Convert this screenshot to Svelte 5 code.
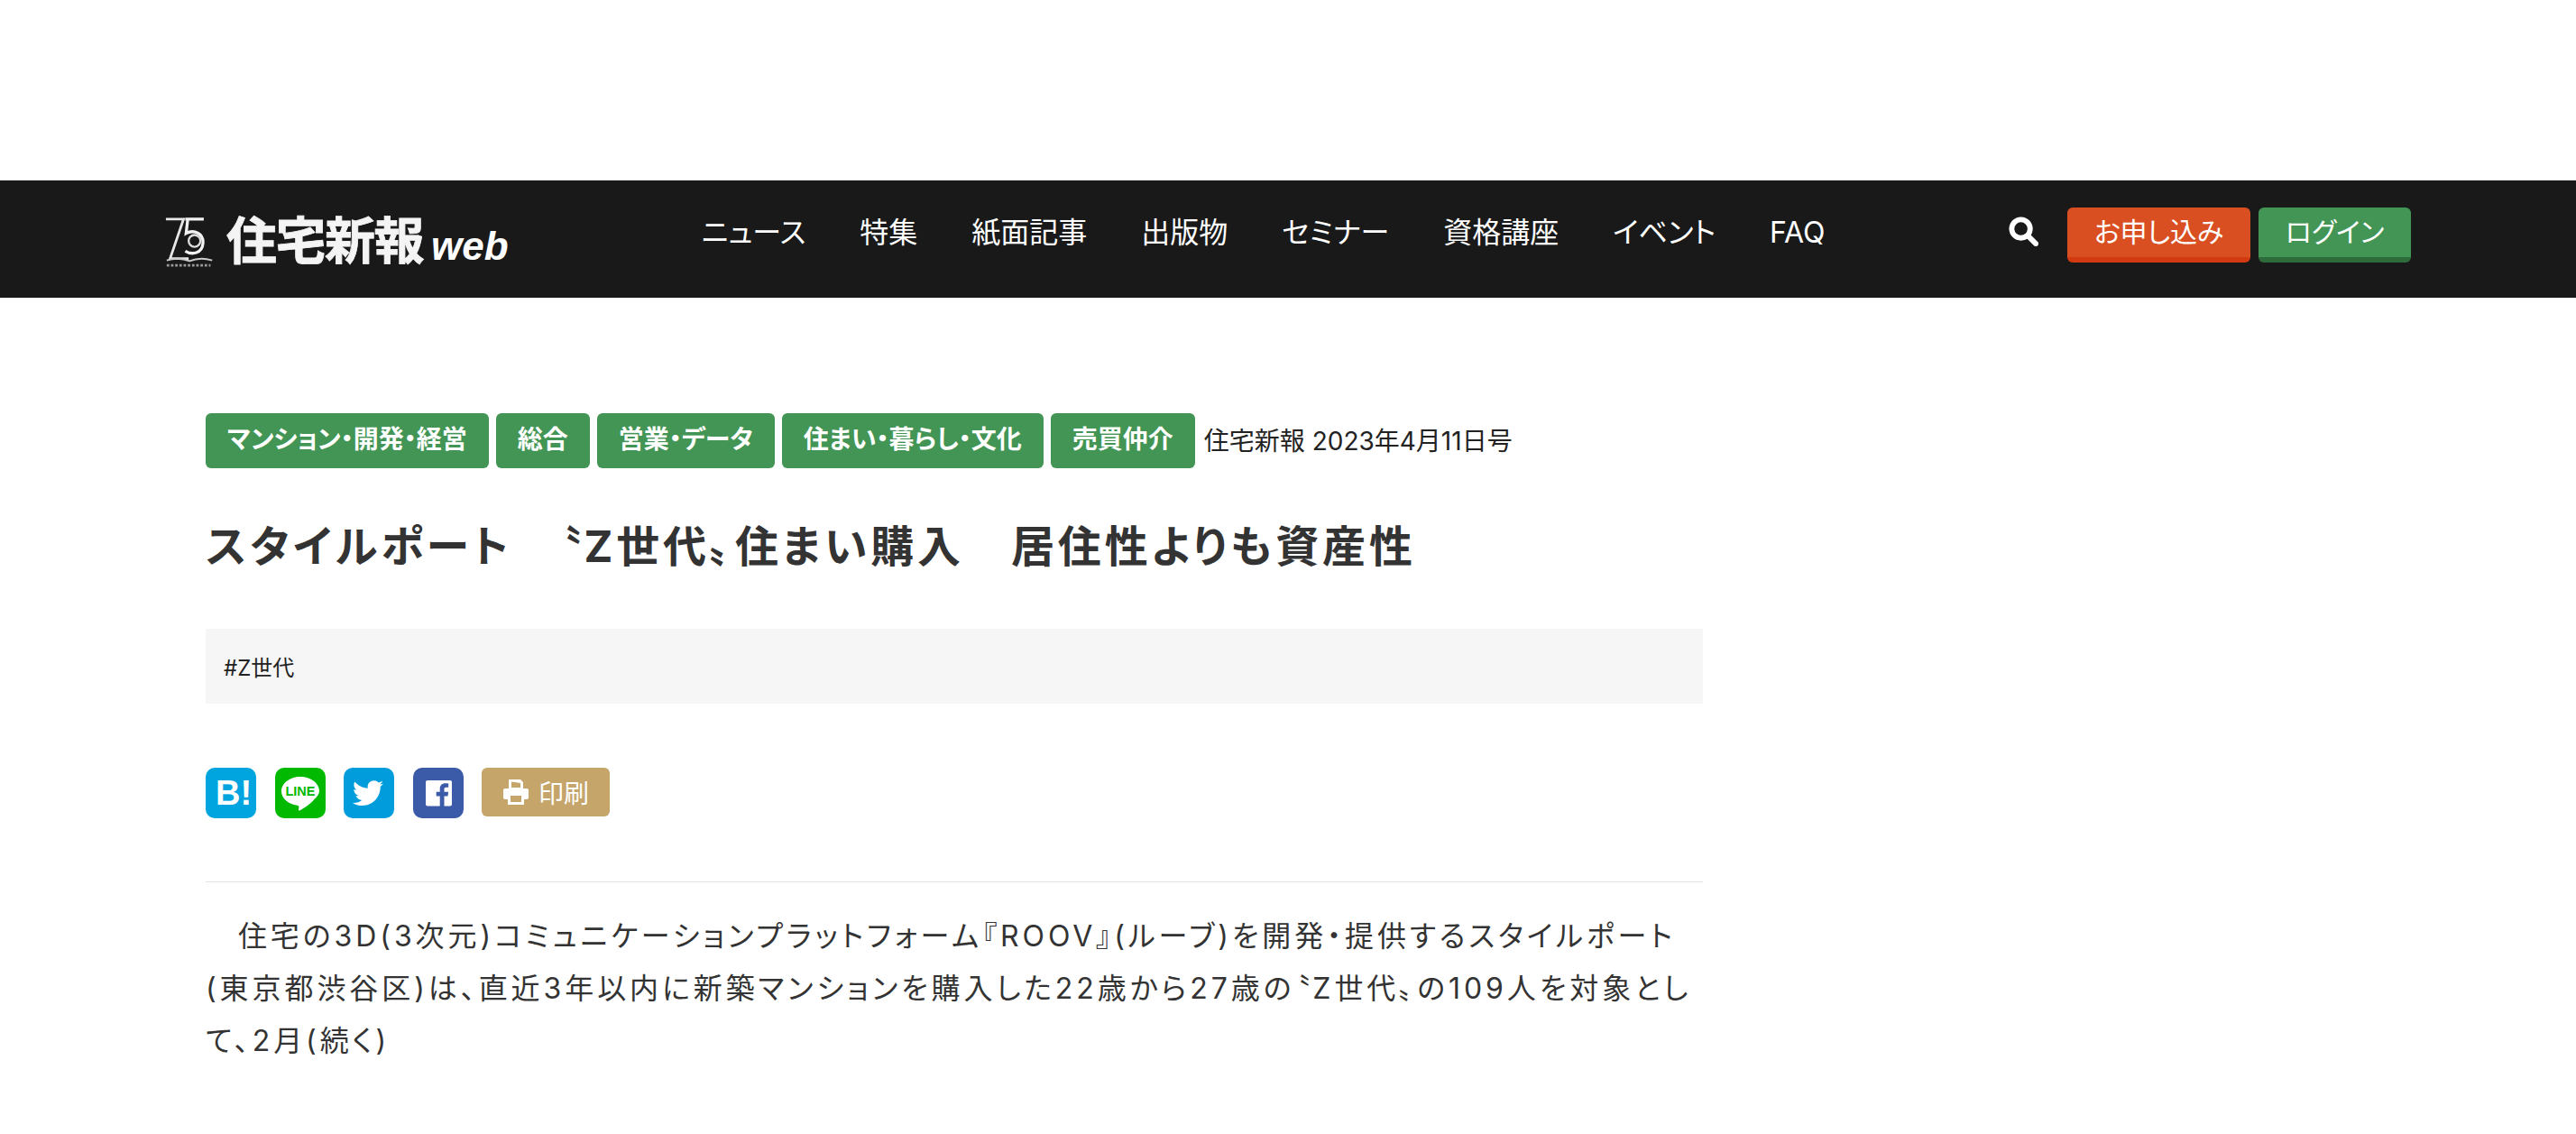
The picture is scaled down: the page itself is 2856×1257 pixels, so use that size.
<script>
	const nav = ['ニュース', '特集', '紙面記事', '出版物', 'セミナー', '資格講座', 'イベント', 'FAQ'];
	const tags = ['マンション・開発・経営', '総合', '営業・データ', '住まい・暮らし・文化', '売買仲介'];
</script>

<div class="page">
	<header class="header">
		<a class="logo" href="#top">
			<svg class="logo-mark" viewBox="0 0 60 60" width="56" height="60" aria-hidden="true">
				<path d="M1 3H22L6 50H28" fill="none" stroke="#e8e8e8" stroke-width="3" />
				<path d="M24 3H46M27 3L25 20C34 15 46 20 45 32C44 44 32 46 24 41" fill="none" stroke="#f2f2f2" stroke-width="3.500" />
				<circle cx="35" cy="29" r="7" fill="none" stroke="#ddd" stroke-width="2.500" />
				<path d="M2 52C12 49 22 50 29 53C36 50 46 49 56 52" fill="none" stroke="#ccc" stroke-width="2" />
				<path d="M2 58H54" stroke="#999" stroke-width="3" stroke-dasharray="3 2" />
			</svg>
			<span class="logo-text">住宅新報</span>
			<span class="logo-web">web</span>
		</a>
		<nav class="nav">
			{#each nav as item}
				<a href="#top">{item}</a>
			{/each}
		</nav>
		<div class="actions">
			<svg class="search" viewBox="0 0 34 34" width="33" height="33" aria-hidden="true">
				<circle cx="14" cy="14" r="10.5" fill="none" stroke="#fff" stroke-width="6" />
				<path d="M22 22L31 31" stroke="#fff" stroke-width="6" stroke-linecap="round" />
			</svg>
			<a class="btn btn-apply" href="#top">お申し込み</a>
			<a class="btn btn-login" href="#top">ログイン</a>
		</div>
	</header>

	<main class="article">
		<div class="meta">
			{#each tags as tag}
				<span class="tag">{tag}</span>
			{/each}
			<span class="issue">住宅新報 2023年4月11日号</span>
		</div>

		<h1 class="title">スタイルポート　〝Z世代〟住まい購入　居住性よりも資産性</h1>

		<div class="keywords">#Z世代</div>

		<div class="share">
			<svg class="icon" viewBox="0 0 56 56" aria-label="はてなブックマーク">
				<rect width="56" height="56" rx="10" fill="#00a4de" />
				<text x="11" y="41" class="icon-b">B!</text>
			</svg>
			<svg class="icon" viewBox="0 0 56 56" aria-label="LINE">
				<rect width="56" height="56" rx="10" fill="#00b900" />
				<path d="M28 10C16.400 10 7 17.200 7 26C7 33.900 14.400 40.400 24.500 41.700C25.200 41.900 26.100 42.200 26.300 42.700C26.500 43.200 26.400 43.900 26.300 44.400L26 46.100C25.900 46.600 25.600 48 27.600 47.200C29.600 46.300 38.400 40.800 42.400 36.200C45.100 33.200 49 30 49 26C49 17.200 39.600 10 28 10Z" fill="#fff" />
				<text x="28" y="31" class="icon-line">LINE</text>
			</svg>
			<svg class="icon" viewBox="0 0 56 56" aria-label="Twitter">
				<rect width="56" height="56" rx="10" fill="#009cdb" />
				<path d="M44 17.500C42.700 18.100 41.400 18.500 40 18.600C41.400 17.800 42.500 16.400 43 14.800C41.700 15.600 40.200 16.100 38.700 16.400C37.400 15 35.600 14.200 33.600 14.200C29.700 14.200 26.600 17.300 26.600 21.200C26.600 21.800 26.700 22.300 26.800 22.800C21 22.500 15.800 19.700 12.300 15.500C11.700 16.500 11.400 17.700 11.400 19C11.400 21.400 12.600 23.600 14.500 24.800C13.300 24.800 12.300 24.500 11.300 24C11.300 27.500 13.700 30.300 16.900 31C16.300 31.100 15.700 31.200 15 31.200C14.600 31.200 14.100 31.200 13.700 31.100C14.600 33.900 17.200 35.900 20.200 36C17.800 37.900 14.800 39 11.500 39C10.900 39 10.400 39 9.800 38.900C12.900 40.900 16.600 42 20.500 42C33.600 42 40.700 31.200 40.700 21.800V20.900C42 19.900 43.100 18.800 44 17.500Z" fill="#fff" />
			</svg>
			<svg class="icon" viewBox="0 0 56 56" aria-label="Facebook">
				<rect width="56" height="56" rx="10" fill="#3b5ba9" />
				<path d="M16 14H41C42.100 14 43 14.900 43 16V40.500C43 41.600 42.100 42.500 41 42.500H34.500V31.500H38.500L39.100 26.800H34.500V24C34.500 22.600 34.900 21.700 36.800 21.700H39.200V17.500C38.800 17.400 37.400 17.300 35.700 17.300C32.200 17.300 29.700 19.500 29.700 23.500V26.800H25.700V31.500H29.700V42.500H16C14.900 42.500 14 41.600 14 40.500V16C14 14.900 14.900 14 16 14Z" fill="#fff" />
			</svg>
			<a class="print" href="#top">
				<svg viewBox="0 0 30 30" width="30" height="30" aria-hidden="true">
					<path d="M7 1H20L23 4V11H7Z M3 11H27C28.100 11 29 11.900 29 13V21C29 22.100 28.100 23 27 23H24V29H6V23H3C1.900 23 1 22.100 1 21V13C1 11.900 1.900 11 3 11Z" fill="#fff" />
					<path d="M9 19H21V26H9Z M10 3.500V10H20V5Z" fill="#c5a56a" />
				</svg>
				<span>印刷</span>
			</a>
		</div>

		<div class="body">
			<p>　住宅の3D(3次元)コミュニケーションプラットフォーム『ROOV』(ルーブ)を開発・提供するスタイルポート(東京都渋谷区)は、直近3年以内に新築マンションを購入した22歳から27歳の〝Z世代〟の109人を対象として、2月(続く)</p>
		</div>
	</main>
</div>

<style>
	:global(body) {
		margin: 0;
		background: #fff;
		font-family: Inter, "Noto Sans CJK JP", sans-serif;
		font-feature-settings: "palt";
		color: #333;
	}

	.page {
		padding-top: 200px;
		padding-bottom: 60px;
	}

	.header {
		height: 130px;
		background: #191919;
		display: flex;
		align-items: center;
		padding: 0 183px 0 183px;
		box-sizing: border-box;
	}

	.logo {
		display: flex;
		align-items: center;
		width: 595px;
		color: #fff;
		text-decoration: none;
	}

	.logo-mark {
		margin-top: 6px;
		flex-shrink: 0;
	}

	.logo-text {
		margin: -4px 0 0 12px;
		font-size: 56px;
		line-height: 60px;
		font-weight: 700;
		font-family: "Noto Sans CJK JP", sans-serif;
		font-feature-settings: normal;
		letter-spacing: -1.500px;
		-webkit-text-stroke: 0.8px #f4f4f4;
		color: #f4f4f4;
	}

	.logo-web {
		margin: 16px 0 0 9px;
		font-family: "Liberation Sans", sans-serif;
		font-size: 44px;
		font-weight: 700;
		font-style: italic;
	}

	.nav {
		display: flex;
		gap: 60px;
		font-size: 32px;
		flex: 1;
		margin-top: -14px;
	}

	.nav a {
		color: #fff;
		text-decoration: none;
		white-space: nowrap;
		line-height: 40px;
	}

	.actions {
		display: flex;
		align-items: center;
		margin-top: -9px;
	}

	.search {
		margin: 0 32px 8px 0;
	}

	.btn {
		display: block;
		height: 61px;
		line-height: 55px;
		box-sizing: border-box;
		border-radius: 6px;
		color: #fff;
		font-size: 30px;
		text-align: center;
		text-decoration: none;
	}

	.btn-apply {
		width: 203px;
		background: #d94f22;
		border-bottom: 6px solid #d23a12;
		margin-right: 9px;
	}

	.btn-login {
		width: 169px;
		background: #429554;
		border-bottom: 6px solid #2e6b3a;
	}

	.article {
		width: 1660px;
		margin-left: 228px;
		padding-top: 128px;
	}

	.meta {
		display: flex;
		align-items: center;
		gap: 8px;
	}

	.tag {
		display: block;
		height: 61px;
		line-height: 58px;
		padding: 0 24px;
		border-radius: 6px;
		background: #429554;
		color: #fff;
		font-size: 28px;
		font-weight: 700;
		white-space: nowrap;
	}

	.issue {
		margin: -3px 0 0 2px;
		font-size: 28px;
		white-space: nowrap;
		color: #222;
	}

	.title {
		margin: 52px 0 0;
		font-size: 48px;
		line-height: 70px;
		font-weight: 700;
		letter-spacing: 3.9px;
		color: #333;
		white-space: nowrap;
	}

	.keywords {
		margin-top: 56px;
		height: 83px;
		line-height: 88px;
		padding-left: 20px;
		background: #f6f6f6;
		font-size: 24px;
		color: #222;
	}

	.share {
		display: flex;
		align-items: flex-start;
		margin-top: 71px;
		gap: 20.5px;
	}

	.icon {
		width: 56px;
		height: 56px;
		display: block;
	}

	.icon-b {
		font-family: "Liberation Sans", sans-serif;
		font-weight: 700;
		font-size: 38px;
		fill: #fff;
	}

	.icon-line {
		font-family: "Liberation Sans", sans-serif;
		font-weight: 700;
		font-size: 14.500px;
		fill: #00b900;
		text-anchor: middle;
	}

	.print {
		display: flex;
		align-items: center;
		justify-content: center;
		gap: 10px;
		width: 142px;
		height: 54px;
		border-radius: 6px;
		background: #c5a56a;
		color: #fff;
		font-size: 28px;
		text-decoration: none;
	}

	.body {
		margin-top: 70px;
		padding-top: 31px;
		border-top: 1px solid #e4e4e4;
	}

	.body p {
		margin: 0;
		font-size: 32px;
		line-height: 58px;
		letter-spacing: 3.93px;
		color: #333;
	}
</style>
